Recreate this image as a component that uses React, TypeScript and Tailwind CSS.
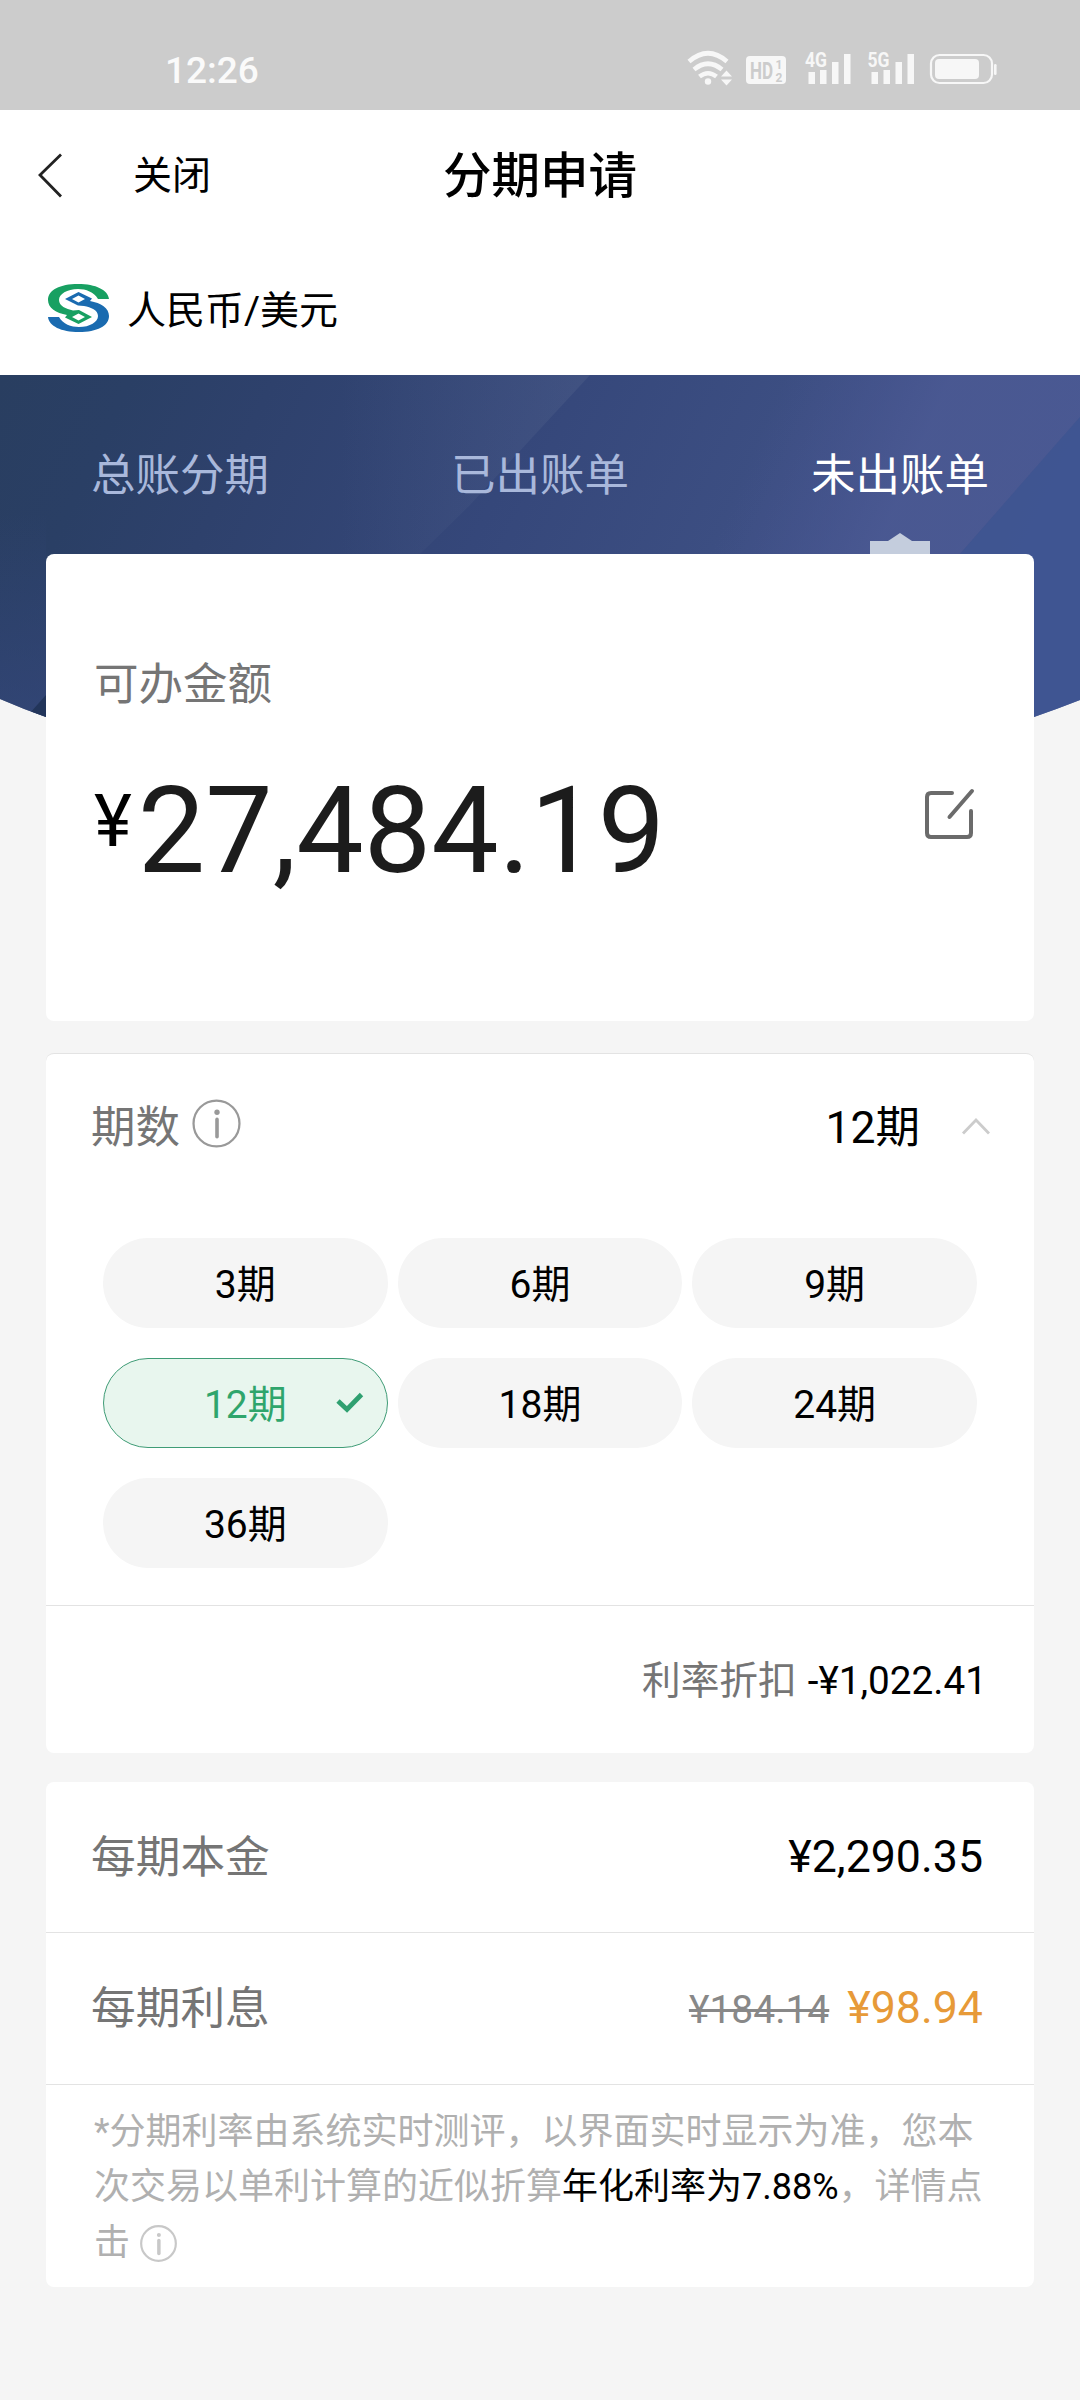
import React from 'react';
import clsx from 'clsx';

const tabs = [
  { id: 'total', label: '总账分期', active: false },
  { id: 'billed', label: '已出账单', active: false },
  { id: 'unbilled', label: '未出账单', active: true },
];

const terms = [3, 6, 9, 12, 18, 24, 36];
const selectedTerm = 12;

function StatusIcons() {
  return (
    <svg width="340" height="50" viewBox="680 45 340 50" fill="#f7f7f7">
      {/* wifi */}
      <g fill="none" stroke="#f7f7f7" strokeWidth="4.6">
        <path d="M689 61.5 Q708 45 727 61.5" />
        <path d="M694 69.5 Q708 58 722 69.5" />
        <path d="M699.5 76.5 Q708 70 716.5 76.5" />
      </g>
      <circle cx="708" cy="81.5" r="3.2" />
      <path d="M721 76.5 L726.5 70.5 L732 76.5 Z M721 79.5 L732 79.5 L726.5 85.5 Z" />
      {/* HD badge */}
      <rect x="746" y="56" width="40" height="28" rx="4" />
      <g fill="#cccccc" fontFamily="Roboto, sans-serif" fontWeight="700">
        <text transform="translate(750 78.5) scale(0.74 1)" fontSize="23">HD</text>
        <text x="775.5" y="69" fontSize="12">1</text>
        <text x="775.5" y="81.5" fontSize="12">2</text>
      </g>
      {/* signal */}
      <path d="M808.5 72h6.5v12h-6.5z M820 70h6.5v14h-6.5z M832 62h6.5v22h-6.5z M844 54h6.5v30h-6.5z" />
      <path d="M871.5 72h6.5v12h-6.5z M883.5 70h6.5v14h-6.5z M895.5 62h6.5v22h-6.5z M907.5 54h6.5v30h-6.5z" />
      <g fontFamily="Roboto, sans-serif" fontWeight="700" fontSize="20">
        <text x="805" y="66.5" textLength="22" lengthAdjust="spacingAndGlyphs">4G</text>
        <text x="867.5" y="66.5" textLength="22" lengthAdjust="spacingAndGlyphs">5G</text>
      </g>
      {/* battery */}
      <rect x="931" y="55" width="61" height="28" rx="8.5" fill="none" stroke="#f7f7f7" strokeWidth="2.2" />
      <rect x="935" y="59" width="44" height="20" rx="4" />
      <rect x="994" y="64" width="2.6" height="11" rx="1.3" />
    </svg>
  );
}

function BankLogo() {
  return (
    <svg width="61" height="48" viewBox="0 0 61 48" fillRule="evenodd">
      <path
        d="M61 15 H50 C46 8 38 5 30 5 C19 5 11 10 11 16 C11 22 18 25 25 26.5 L31 26 L44 33 L30.5 40 L17 33.5 L19 31 C8 29 0 24 0 16 C0 6 12 0 30 0 C48 0 60 6 61 15 Z M30.5 29.5 L24 33 L30.5 36.5 L37 33 Z"
        fill="#18a062"
      />
      <path
        d="M0 33 H11 C15 40 23 43 31 43 C42 43 50 38 50 32 C50 26 43 23.5 36 22 L30 21.5 L17 15 L30.5 8 L44 14.5 L42 17 C53 19 61 24 61 32 C61 42 49 48 31 48 C13 48 1 42 0 33 Z M30.5 11.5 L24 15 L30.5 18.5 L37 15 Z"
        fill="#1a6bb0"
      />
    </svg>
  );
}

function HeroBackground() {
  return (
    <svg className="absolute inset-x-0 top-0" width="1080" height="345" viewBox="0 0 1080 345">
      <defs>
        <linearGradient id="hero" x1="0" y1="0" x2="1" y2="0.15">
          <stop offset="0" stopColor="#293e60" />
          <stop offset="0.12" stopColor="#2a3f65" />
          <stop offset="0.25" stopColor="#2e416c" />
          <stop offset="0.5" stopColor="#35477a" />
          <stop offset="0.75" stopColor="#3d4f83" />
          <stop offset="1" stopColor="#43568f" />
        </linearGradient>
        <linearGradient id="side" x1="0" y1="0" x2="0" y2="1">
          <stop offset="0.4" stopColor="#34477a" stopOpacity="0" />
          <stop offset="1" stopColor="#34477a" stopOpacity="0.7" />
        </linearGradient>
        <linearGradient id="beam" x1="0" y1="0" x2="1" y2="0">
          <stop offset="0" stopColor="#5a6a90" stopOpacity="0" />
          <stop offset="1" stopColor="#5a6a90" stopOpacity="0.3" />
        </linearGradient>
        <linearGradient id="beamRight" x1="760" y1="60" x2="900" y2="120" gradientUnits="userSpaceOnUse">
          <stop offset="0" stopColor="#475390" stopOpacity="0" />
          <stop offset="1" stopColor="#4b5993" stopOpacity="0.85" />
        </linearGradient>
        <clipPath id="arc">
          <path d="M0 0 H1080 V325 Q1057 334 1034 342 H46 Q23 334 0 324 Z" />
        </clipPath>
      </defs>
      <g clipPath="url(#arc)">
        <rect width="1080" height="345" fill="url(#hero)" />
        <rect width="46" height="345" fill="url(#side)" />
        <path d="M340 0 H590 L470 130 L420 179 H340 Z" fill="url(#beam)" />
        <path d="M700 0 H1080 V42 L960 179 H700 Z" fill="url(#beamRight)" />
        <path d="M1080 42 L960 179 V345 H1080 Z" fill="#3f5592" fillOpacity="0.8" />
        <path d="M30 338 L46 320 V345 Z" fill="#22355a" />
      </g>
    </svg>
  );
}

function InfoIcon({ size, color, strokeWidth }: { size: number; color: string; strokeWidth: number }) {
  return (
    <svg width={size} height={size} viewBox="0 0 48 48" fill="none" stroke={color} strokeWidth={strokeWidth}>
      <circle cx="24" cy="24" r="22.5" />
      <path d="M24.5 20 V37" strokeWidth={strokeWidth * 1.6} strokeLinecap="round" />
      <circle cx="24.5" cy="13" r="2.6" fill={color} stroke="none" />
    </svg>
  );
}

function TermChip({ term }: { term: number }) {
  const selected = term === selectedTerm;
  return (
    <button
      className={clsx(
        'relative h-[90px] rounded-full pt-[4px] text-[39px] leading-none',
        selected ? 'border border-[#3f9c76] bg-[#e8f6ee] text-[#2fa56c]' : 'bg-[#f5f5f5] text-black'
      )}
    >
      {term}期
      {selected && (
        <svg className="absolute top-[32px] right-[22px]" width="30" height="24" viewBox="0 0 30 24" fill="none">
          <path d="M3 10 L12 18.5 L26.5 3.5" stroke="#2fa070" strokeWidth="4.8" />
        </svg>
      )}
    </button>
  );
}

export default function App() {
  return (
    <div className="flex h-[2400px] w-[1080px] flex-col overflow-hidden bg-[#f5f5f5] font-[Roboto,'Noto_Sans_CJK_SC',sans-serif] text-black">
      <div className="flex h-[110px] items-center justify-between bg-[#cccccc] pt-[30px] pr-[60px] pl-[165px]">
        <span className="pt-[1px] text-[37px] font-medium text-[#fafafa]">12:26</span>
        <StatusIcons />
      </div>

      <header className="grid h-[131px] grid-cols-3 items-center bg-white">
        <div className="flex items-center gap-[70px] pl-[37px]">
          <svg width="26" height="46" viewBox="0 0 26 46" fill="none" stroke="#222" strokeWidth="2.8">
            <path d="M24 1.5 L3 22 L24 43.5" />
          </svg>
          <span className="pt-[2px] text-[39px]">关闭</span>
        </div>
        <h1 className="pt-[3px] text-center text-[48.5px] font-medium">分期申请</h1>
      </header>

      <div className="flex h-[134px] items-center gap-[18px] bg-white pl-[48px]">
        <BankLogo />
        <span className="pt-[7px] text-[39px]">人民币/美元</span>
      </div>

      <section className="relative">
        <HeroBackground />
        <nav className="relative grid h-[179px] grid-cols-3">
          {tabs.map(tab => (
            <div key={tab.id} className="flex flex-col items-center">
              <span
                className={clsx(
                  'mt-[69px] text-[44.5px] leading-[64px]',
                  tab.active ? 'text-white' : 'text-[#a9b8db]'
                )}
              >
                {tab.label}
              </span>
              {tab.active && (
                <svg className="mt-auto" width="60" height="21" viewBox="0 0 60 21" fill="#c4cddd">
                  <path d="M0 8 H18 L30 0 L42 8 H60 V21 H0 Z" />
                </svg>
              )}
            </div>
          ))}
        </nav>

        <div className="relative mx-[46px] h-[467px] rounded-lg bg-white px-[48px]">
          <p className="pt-[99px] text-[44.5px] leading-[64px] text-[#757575]">可办金额</p>
          <div className="mt-[39px] flex items-center justify-between">
            <div className="flex items-start">
              <span className="mt-[24px] text-[72px] leading-[84px]">¥</span>
              <span className="ml-[6px] text-[120px] leading-[150px] text-[#1c1c1c]">27,484.19</span>
            </div>
            <svg className="mr-[11px] mb-[34px]" width="52" height="52" viewBox="0 0 52 52" fill="none" stroke="#6b6b6b" strokeWidth="4" strokeLinecap="round">
              <path d="M29 5 H8 Q4 5 4 9 V45 Q4 49 8 49 H44 Q48 49 48 45 V23" />
              <path d="M26.5 29 L49 3" />
            </svg>
          </div>
        </div>
      </section>

      <section className="mx-[46px] mt-[32px] h-[700px] rounded-lg border-t border-[#e3e3e3] bg-white">
        <div className="flex h-[145px] items-center justify-between pr-[43px] pl-[45px]">
          <div className="flex items-center gap-[12px]">
            <span className="pt-[3px] text-[44.5px] text-[#757575]">期数</span>
            <span className="mb-[7px]">
              <InfoIcon size={49} color="#999999" strokeWidth={2.2} />
            </span>
          </div>
          <div className="flex items-center gap-[41px]">
            <span className="pt-[3px] text-[44.5px]">12期</span>
            <svg width="30" height="18" viewBox="0 0 30 18" fill="none" stroke="#cccccc" strokeWidth="2.8">
              <path d="M2 15.5 L15 2 L28 15.5" />
            </svg>
          </div>
        </div>

        <div className="mt-[39px] grid h-[367px] grid-cols-3 content-start gap-x-[10px] gap-y-[30px] px-[57px]">
          {terms.map(term => (
            <TermChip key={term} term={term} />
          ))}
        </div>

        <div className="flex h-[147px] items-center justify-end gap-[11px] border-t border-[#e3e3e3] pt-[4px] pr-[47px] text-[38.7px]">
          <span className="text-[#757575]">利率折扣</span>
          <span>-¥1,022.41</span>
        </div>
      </section>

      <section className="mx-[46px] mt-[29px] h-[505px] rounded-lg bg-white">
        <div className="flex h-[150px] items-center justify-between pt-[1px] pr-[51px] pl-[45px] text-[44.7px]">
          <span className="pt-[2px] text-[#757575]">每期本金</span>
          <span>¥2,290.35</span>
        </div>
        <div className="flex h-[152px] items-center justify-between border-t border-[#e3e3e3] pr-[51px] pl-[45px] text-[44.7px]">
          <span className="pt-[2px] text-[#757575]">每期利息</span>
          <div className="flex items-baseline gap-[18px]">
            <span className="text-[39px] text-[#888888] line-through">¥184.14</span>
            <span className="text-[#e79a38]">¥98.94</span>
          </div>
        </div>
        <div className="border-t border-[#e3e3e3] pt-[20px] pl-[48px] text-[36px] leading-[55px] whitespace-nowrap text-[#b0b0b0]">
          <p>*分期利率由系统实时测评，以界面实时显示为准，您本</p>
          <p>
            次交易以单利计算的近似折算<span className="text-black">年化利率为7.88%</span>，详情点
          </p>
          <p className="mt-[1px] flex items-center gap-[10px]">
            击
            <InfoIcon size={37} color="#c8c8c8" strokeWidth={2.8} />
          </p>
        </div>
      </section>
    </div>
  );
}
